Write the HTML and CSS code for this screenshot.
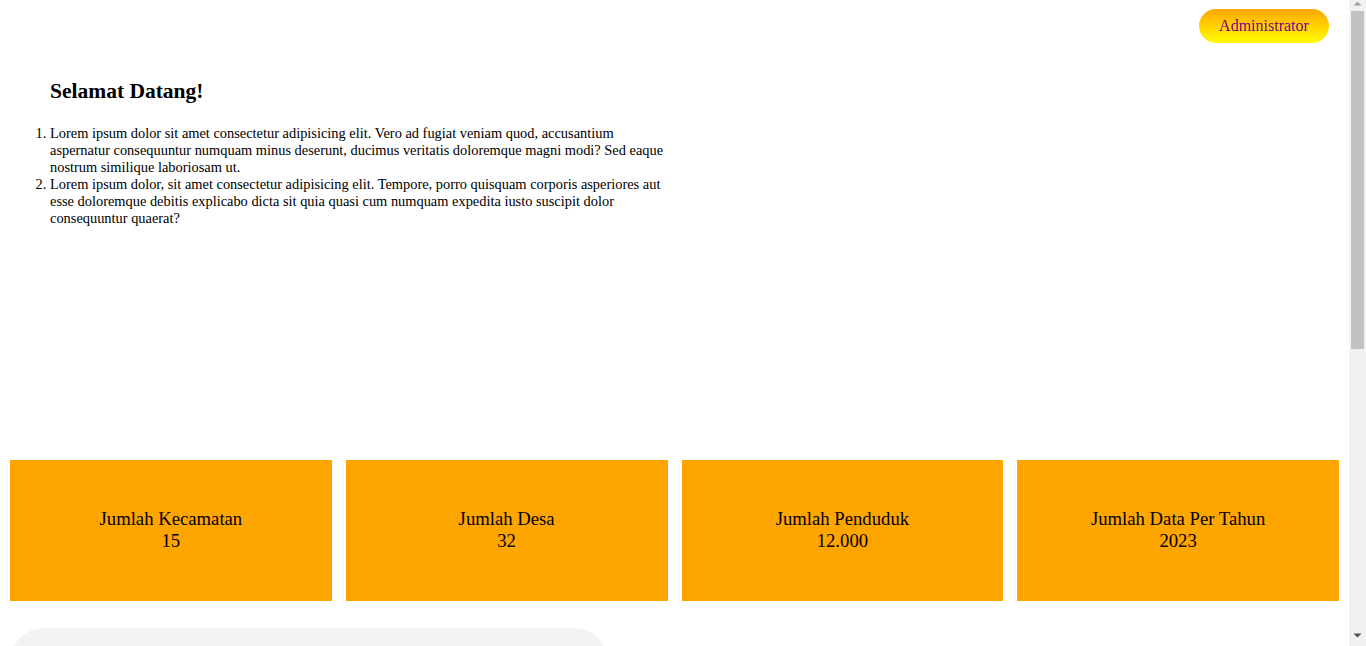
FILE: index.html
```html
<!DOCTYPE html>
<html lang="id">
<head>
<meta charset="utf-8">
<title>Dashboard</title>
<link rel="stylesheet" href="styles.css">
</head>
<body>
<header class="topbar">
  <button class="admin-btn">Administrator</button>
</header>
<section class="welcome">
  <h2 class="welcome-title">Selamat Datang!</h2>
  <ol class="welcome-list">
    <li>Lorem ipsum dolor sit amet consectetur adipisicing elit. Vero ad fugiat veniam quod, accusantium aspernatur consequuntur numquam minus deserunt, ducimus veritatis doloremque magni modi? Sed eaque nostrum similique laboriosam ut.</li>
    <li>Lorem ipsum dolor, sit amet consectetur adipisicing elit. Tempore, porro quisquam corporis asperiores aut esse doloremque debitis explicabo dicta sit quia quasi cum numquam expedita iusto suscipit dolor consequuntur quaerat?</li>
  </ol>
</section>
<section class="stats">
  <div class="stat-card">Jumlah Kecamatan<br>15</div>
  <div class="stat-card">Jumlah Desa<br>32</div>
  <div class="stat-card">Jumlah Penduduk<br>12.000</div>
  <div class="stat-card">Jumlah Data Per Tahun<br>2023</div>
</section>
<section class="panel-wrap">
  <div class="panel"></div>
</section>
<div class="fake-scrollbar" aria-hidden="true">
  <svg width="17" height="646" viewBox="0 0 17 646">
    <rect x="0" y="0" width="17" height="646" fill="#f1f1f1"/>
    <polygon points="4.5,5.5 12.5,5.5 8.5,1.5" fill="#a3a3a3"/>
    <rect x="2" y="11" width="13" height="338" fill="#c1c1c1"/>
    <polygon points="4.5,633.5 12.5,633.5 8.5,637.5" fill="#505050"/>
  </svg>
</div>
</body>
</html>
```
FILE: styles.css
```css
html, body {
  margin: 0;
  padding: 0;
  background: #fff;
  font-family: "Liberation Serif", "Times New Roman", serif;
  color: #000;
}

body {
  margin-right: 17px;
}

.fake-scrollbar {
  position: fixed;
  top: 0;
  right: 0;
  width: 17px;
  height: 100vh;
  background: #f1f1f1;
  line-height: 0;
}

.topbar {
  display: flex;
  justify-content: flex-end;
  padding: 9px 20px 0 0;
}

.admin-btn {
  width: 130px;
  height: 34px;
  border: none;
  border-radius: 17px;
  background: linear-gradient(to bottom, #ffa500, #ffff00);
  color: #800080;
  font-family: "Liberation Serif", "Times New Roman", serif;
  font-size: 16px;
  padding: 0;
}

.welcome {
  display: flow-root;
  width: 50%;
  box-sizing: border-box;
  padding: 0 0 0 10px;
  height: 417px;
}

.welcome-title {
  margin: 36px 0 21px 40px;
  font-size: 21.5px;
  font-weight: bold;
}

.welcome-list {
  margin: 0;
  padding-left: 40px;
  font-size: 14.4px;
  line-height: 17px;
}

.stats {
  display: flex;
  gap: 14px;
  padding: 0 10px;
}

.stat-card {
  flex: 1;
  height: 141px;
  background: #ffa500;
  display: flex;
  align-items: center;
  justify-content: center;
  text-align: center;
  font-size: 18.7px;
  line-height: 22px;
  padding-bottom: 2px;
  box-sizing: border-box;
}

.panel-wrap {
  padding: 27px 10px 52px;
}

.panel {
  width: 598px;
  height: 500px;
  background: #f3f3f3;
  border-radius: 34px;
}
```
